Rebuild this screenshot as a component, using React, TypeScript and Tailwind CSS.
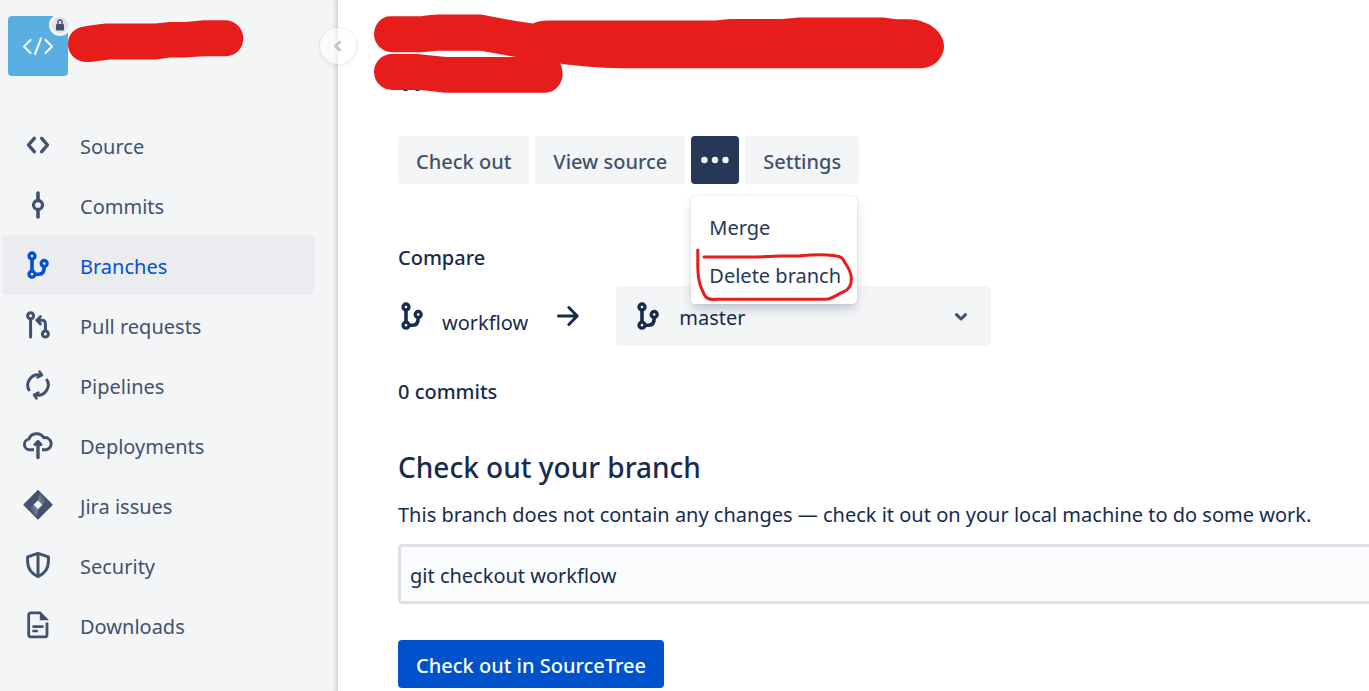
import type { ReactNode } from "react";

interface IconProps {
  children: ReactNode;
  className?: string;
}

function Icon({ children, className = "" }: IconProps) {
  return (
    <svg
      className={`h-9 w-9 shrink-0 ${className}`}
      viewBox="0 0 36 36"
      fill="none"
      stroke="currentColor"
      strokeWidth={3}
      strokeLinecap="round"
      strokeLinejoin="round"
      aria-hidden="true"
    >
      {children}
    </svg>
  );
}

function BranchIcon({ className }: { className?: string }) {
  return (
    <Icon className={className}>
      <g strokeWidth={3.3}>
        <circle cx="12" cy="9" r="3" />
        <circle cx="12" cy="27.2" r="3" />
        <circle cx="24.2" cy="16.5" r="3" />
        <path d="M12 12.5V24M15.5 27.2H19C22.6 27.2 24.2 24.6 24.2 20" strokeWidth={3.6} />
      </g>
    </Icon>
  );
}

const navItems = [
  {
    label: "Source",
    icon: (
      <Icon>
        <path d="M14.3 11.3L8.5 18l5.8 6.7M21.7 11.3l5.8 6.7-5.8 6.7" strokeWidth={3.4} />
      </Icon>
    ),
  },
  {
    label: "Commits",
    icon: (
      <Icon>
        <circle cx="18" cy="18" r="4.5" strokeWidth={3.3} />
        <path d="M18 6v7M18 23v7" strokeWidth={3.6} />
      </Icon>
    ),
  },
  { label: "Branches", icon: <BranchIcon />, active: true },
  {
    label: "Pull requests",
    icon: (
      <Icon>
        <circle cx="10.6" cy="8.7" r="3" />
        <circle cx="25.4" cy="27" r="3" />
        <path d="M10.6 12v18M25.4 23.5V16.5Q25.4 13.3 22 13.3H18" />
        <path d="M20.4 9.7L16.8 13.3l3.6 3.6" />
      </Icon>
    ),
  },
  {
    label: "Pipelines",
    icon: (
      <Icon>
        <path d="M20.5 8A10.4 10.4 0 0 0 9.6 24M26.4 12A10.4 10.4 0 0 1 15.5 28" strokeLinecap="butt" />
        <path d="M19.6 4.6L22 8.2l-4.4 2.2M16.4 31.4L14 27.8l4.4-2.2" strokeWidth={2.6} />
      </Icon>
    ),
  },
  {
    label: "Deployments",
    icon: (
      <Icon>
        <path d="M14 22.8H9.6a5.4 5.4 0 0 1-.8-10.7A8.4 8.4 0 0 1 23.8 10.7A6.1 6.1 0 1 1 26.2 22.8H22" strokeLinecap="butt" />
        <path d="M18 15v15.5" strokeWidth={3.4} />
        <path d="M15 17.6l3-3.1 3 3.1z" fill="currentColor" />
      </Icon>
    ),
  },
  {
    label: "Jira issues",
    icon: (
      <Icon>
        <defs>
          <linearGradient id="jira-top" x1="18" y1="15" x2="26" y2="12" gradientUnits="userSpaceOnUse">
            <stop offset="0" stopColor="#8590a4" />
            <stop offset="1" stopColor="#42526e" />
          </linearGradient>
          <linearGradient id="jira-bottom" x1="18" y1="21" x2="10" y2="24" gradientUnits="userSpaceOnUse">
            <stop offset="0" stopColor="#8590a4" />
            <stop offset="1" stopColor="#42526e" />
          </linearGradient>
        </defs>
        <path
          d="M18 2.8L3.8 17 Q3 17.8 3.8 18.6L18 32.8L32.2 18.6Q33 17.8 32.2 17zM18 13.3l4.5 4.5-4.5 4.5-4.5-4.5z"
          fill="currentColor"
          fillRule="evenodd"
          stroke="none"
        />
        <path d="M18 13.3l4.5 4.5 3.8-3.8L20.5 6Q18 9 18 13.3z" fill="url(#jira-top)" stroke="none" />
        <path d="M18 22.3l-4.5-4.5-3.8 3.8L15.5 29.6Q18 26.6 18 22.3z" fill="url(#jira-bottom)" stroke="none" />
      </Icon>
    ),
  },
  {
    label: "Security",
    icon: (
      <Icon>
        <path d="M18 6.3L28.4 9.8V14.5C28.4 22 24.5 26.5 18 29.6C11.5 26.5 7.6 22 7.6 14.5V9.8z" />
        <path d="M18 7v22" />
      </Icon>
    ),
  },
  {
    label: "Downloads",
    icon: (
      <Icon>
        <path d="M20 5.8H10.7a2 2 0 0 0-2 2V27.8a2 2 0 0 0 2 2H25a2 2 0 0 0 2-2V15.5" strokeWidth={2.8} strokeLinecap="butt" />
        <path d="M19.8 4.5V13.2H28.4V12.5L20.5 4.5z" fill="currentColor" stroke="none" />
        <path d="M13.5 19.6h9M13.5 24h3.3" strokeWidth={2.7} />
      </Icon>
    ),
  },
];

function Sidebar() {
  return (
    <aside className="relative w-[338px] shrink-0 border-r border-[#d5d8dd] bg-[#f4f5f7] shadow-[inset_-4px_0_4px_-3px_rgba(9,30,66,0.18)]">
      <div className="relative mt-4 ml-2 flex h-[60px] w-[60px] items-center justify-center rounded bg-[#59afe1]">
        <svg
          className="h-5 w-8"
          viewBox="0 0 32 20"
          fill="none"
          stroke="#fff"
          strokeWidth={2}
          strokeLinecap="round"
          strokeLinejoin="round"
          aria-hidden="true"
        >
          <path d="M8.5 4L2 10.5 8.5 17M23.5 4L30 10.5 23.5 17M19 2.3L13 18.2" />
        </svg>
        <span className="absolute -top-0.5 -right-[3px] flex h-[22px] w-[22px] items-center justify-center rounded-full border-[3px] border-[#f4f5f7] bg-[#dfe1e6]">
          <svg className="h-3 w-2.5" viewBox="0 0 10 12" aria-hidden="true">
            <rect x="1" y="5" width="8" height="6.5" rx="1.2" fill="#42526e" />
            <path d="M3 5.5V3a2 2 0 0 1 4 0v2.5" fill="none" stroke="#42526e" strokeWidth="1.4" />
          </svg>
        </span>
      </div>
      <svg
        className="absolute top-4 left-[66px] h-12 w-[180px]"
        viewBox="66 16 180 48"
        fill="#e71d1c"
        aria-hidden="true"
      >
        <path d="M84 26.6Q92 25 106 23.6H155L170 22H185L204 20.3H226C236 20.6 243.3 29 243.3 38.3C243.3 48 236 56.3 226 56.3H205L183 57.6H170L156 59.4H110L90 62C77 63 68 55 68 44C68 35 74 28 84 26.6Z" />
      </svg>
      <nav className="mt-[39px] mr-[23px] ml-0.5">
        <ul>
          {navItems.map((item) => (
            <li key={item.label}>
              <a
                href="#"
                className={`flex h-[60px] items-center gap-6 rounded pl-[18px] text-[20px] ${
                  item.active ? "bg-[#ebecf0] text-[#0052cc]" : "text-[#42526e]"
                }`}
              >
                {item.icon}
                <span className="pt-1">{item.label}</span>
              </a>
            </li>
          ))}
        </ul>
      </nav>
      <button
        type="button"
        aria-label="Collapse sidebar"
        className="absolute top-7 -right-[19px] flex h-9 w-9 items-center justify-center rounded-full bg-white/60 text-[#c1c7d0] shadow-[0_0_0_1px_rgba(9,30,66,0.05),0_2px_4px_1px_rgba(9,30,66,0.05)]"
      >
        <svg className="h-4 w-4" viewBox="0 0 16 16" fill="none" stroke="currentColor" strokeWidth={3} strokeLinecap="round" strokeLinejoin="round" aria-hidden="true">
          <path d="M9.6 4L5.6 8l4 4" />
        </svg>
      </button>
    </aside>
  );
}

function ActionButton({ children }: { children: ReactNode }) {
  return (
    <button
      type="button"
      className="h-12 rounded bg-[#f4f5f7] px-[18px] pt-1 text-[20px] font-medium whitespace-nowrap text-[#42526e]"
    >
      {children}
    </button>
  );
}

function MoreMenu() {
  return (
    <div className="relative">
      <button
        type="button"
        aria-label="More actions"
        aria-expanded="true"
        className="flex h-12 w-12 items-center justify-center rounded bg-[#253858] text-[#f4f5f7]"
      >
        <svg className="h-9 w-9" viewBox="0 0 36 36" fill="currentColor" aria-hidden="true">
          <circle cx="7.4" cy="18" r="3.2" />
          <circle cx="18" cy="18" r="3.2" />
          <circle cx="28.5" cy="18" r="3.2" />
        </svg>
      </button>
      <div
        role="menu"
        className="absolute top-[60px] left-0 z-10 w-[166px] rounded bg-white pt-2 pb-1 shadow-[0_6px_12px_-2px_rgba(9,30,66,0.25),0_0_1px_rgba(9,30,66,0.31)]"
      >
        <button type="button" role="menuitem" className="block h-12 w-full pl-[18px] text-left text-[20px] whitespace-nowrap text-[#253858]">
          Merge
        </button>
        <button type="button" role="menuitem" className="block h-12 w-full pl-[18px] text-left text-[20px] whitespace-nowrap text-[#253858]">
          Delete branch
        </button>
        <svg
          className="pointer-events-none absolute top-0 left-0 h-[108px] w-[166px]"
          viewBox="691 196 166 108"
          fill="none"
          stroke="#e71d1c"
          strokeWidth={3}
          strokeLinecap="round"
          strokeLinejoin="round"
          aria-hidden="true"
        >
          <path d="M697.8 250V268C698 282 701 288 704.5 295C706.5 299 710 300 716 299.2H826C832 299 836 295 843 292C849 290 851.5 284 851.4 278C851 270 846 265 843.5 260C841 256 838 256 828 255C815 254 808 255 799 256H781L756 257H704" />
        </svg>
      </div>
    </div>
  );
}

export default function App() {
  return (
    <div className="flex min-h-screen overflow-hidden bg-white font-['Noto_Sans','Segoe_UI',sans-serif] text-[#172b4d]">
      <Sidebar />
      <main className="min-w-0 flex-1 pb-[3px] pl-[60px]">
        <header className="relative h-[136px]">
          <svg
            className="absolute top-0 -left-[38px] h-[100px] w-[600px]"
            viewBox="360 0 600 100"
            fill="#e71d1c"
            aria-hidden="true"
          >
            <path d="M403.5 88h4v3h-4zM415.5 88h4v3h-4z" fill="#172b4d" />
            <path d="M390 16.3H421Q430 14.5 438 14.5H481L516 21L533 23.5Q539 20.4 547 20.4H715L730 19H782L799 17.4H883L897 19.3H909C930 20 944 33 944 46C944 58 934 68.3 920 68.3H620C600 68 578 66 559 63.5L513 56.6L481 50.8H438L421 52.3H392C382 52 374 44 374 34C374 24 382 16.3 390 16.3Z" />
            <path d="M392 54H417L446 57H555C560 61 562.6 67 562.6 74C562.6 84 555 92.7 545 92.7H445L421 90H392C382 89.5 374 82 374 72C374 62 382 54 392 54Z" />
          </svg>
        </header>

        <div className="flex gap-1.5">
          <ActionButton>Check out</ActionButton>
          <ActionButton>View source</ActionButton>
          <MoreMenu />
          <ActionButton>Settings</ActionButton>
        </div>

        <section>
          <h2 className="mt-[60px] text-[20px] leading-7 font-medium">Compare</h2>
          <div className="mt-[14px] flex h-[60px] items-center">
            <BranchIcon className="-ml-1" />
            <span className="ml-3 pt-[14px] text-[20px]">workflow</span>
            <Icon className="ml-[22px]">
              <path d="M8.5 18H27M18.8 9.5L27.2 18l-8.4 8.5" />
            </Icon>
            <div className="relative ml-[30px] h-full">
              <BranchIcon className="pointer-events-none absolute top-3 left-[14px]" />
              <select
                aria-label="Destination branch"
                className="h-full w-[375px] appearance-none rounded bg-[#f4f5f7] pt-1 pl-[63px] text-[20px] text-[#172b4d]"
              >
                <option>master</option>
              </select>
              <svg
                className="pointer-events-none absolute top-[22px] right-[22px] h-4 w-4 text-[#42526e]"
                viewBox="0 0 16 16"
                fill="none"
                stroke="currentColor"
                strokeWidth={3}
                strokeLinecap="round"
                strokeLinejoin="round"
                aria-hidden="true"
              >
                <path d="M3.5 6.6L8 11l4.5-4.4" />
              </svg>
            </div>
          </div>
          <h2 className="mt-8 text-[20px] leading-7 font-medium">0 commits</h2>
        </section>

        <section>
          <h1 className="mt-10 text-[28px] leading-[42px] font-medium">Check out your branch</h1>
          <p className="mt-3 text-[20px] leading-[30px] whitespace-nowrap">
            This branch does not contain any changes — check it out on your local machine to do some work.
          </p>
          <input
            readOnly
            aria-label="Checkout command"
            value="git checkout workflow"
            className="mt-[14px] block h-[60px] w-full rounded-l border-[3px] border-r-0 border-[#dfe1e6] bg-[#fafbfc] pt-0.5 pl-[9px] text-[20px] outline-none"
          />
          <button
            type="button"
            className="mt-9 h-12 rounded bg-[#0052cc] px-[18px] pt-1 text-[20px] font-medium whitespace-nowrap text-white"
          >
            Check out in SourceTree
          </button>
        </section>
      </main>
    </div>
  );
}
